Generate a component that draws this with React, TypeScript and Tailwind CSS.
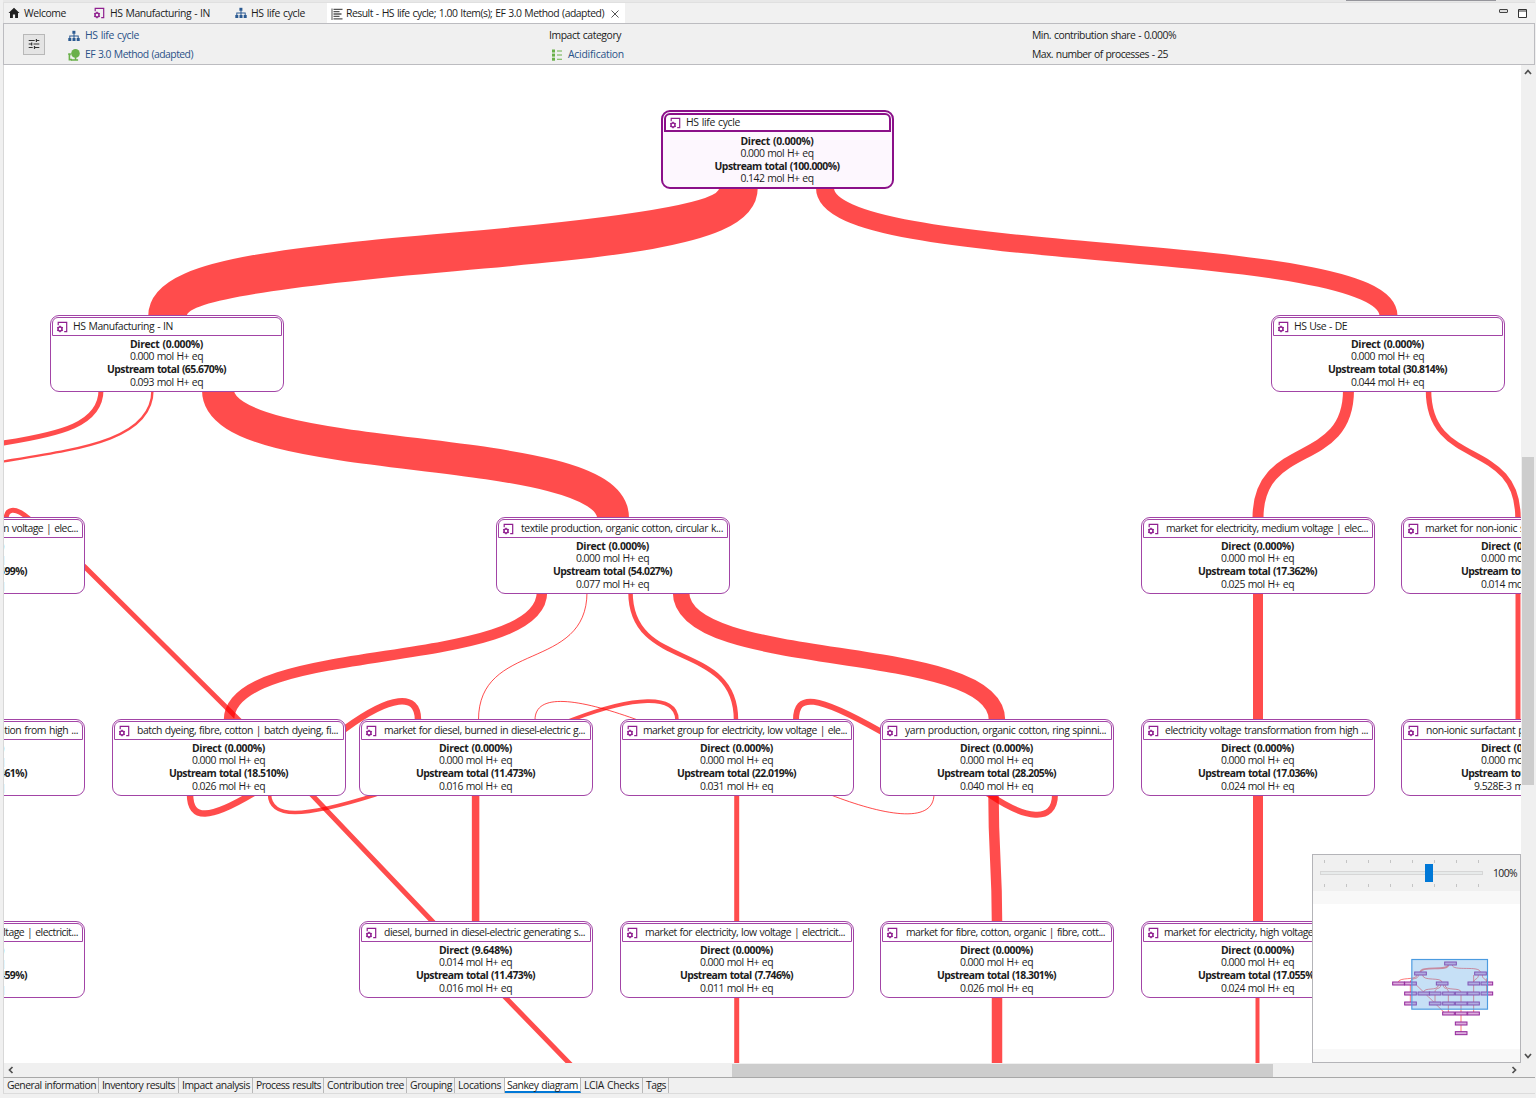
import { useLayoutEffect, useRef, useState } from 'react';

type TextProps = { children: string; w: number; className?: string };

/* A single line of text whose tracking is tuned so that it fills `w` pixels. */
function Line({ children, w, className = '' }: TextProps) {
  const ref = useRef<HTMLSpanElement>(null);
  const [spacing, setSpacing] = useState(0);
  useLayoutEffect(() => {
    const el = ref.current;
    if (!el) return;
    const natural = el.getBoundingClientRect().width - spacing * children.length;
    setSpacing((w - natural) / children.length);
  }, [children, w]);
  return (
    <span ref={ref} className={`inline-block whitespace-pre [word-spacing:0.7px] ${className}`} style={{ letterSpacing: `${spacing}px` }}>
      {children}
    </span>
  );
}

function ProcessIcon({ className = '' }: { className?: string }) {
  return (
    <svg viewBox="0 0 12 12" className={className} fill="none" stroke="#8f1f8f">
      <path d="M2.200 4.200V1.300H10.700V10.600H8.200" strokeWidth="1.200" />
      <circle cx="4" cy="8" r="2" strokeWidth="1.400" />
      <path d="M4 4.800V6M4 10v1.200M1.200 6.400l1.100.6M5.700 9l1.100.6M1.200 9.600L2.300 9M5.700 7l1.100-.6" strokeWidth="1.400" />
    </svg>
  );
}

function SystemIcon() {
  return (
    <svg viewBox="0 0 12 12" className="h-3 w-3 shrink-0" fill="#2b5a92">
      <rect x="4.4" y="0.8" width="3" height="3" />
      <rect x="0.3" y="8" width="3" height="3" />
      <rect x="4.5" y="8" width="3" height="3" />
      <rect x="8.7" y="8" width="3" height="3" />
      <path d="M5.5 3.5h1v2h4.2V8h-1V6.5H6.5V8h-1V6.5H2.3V8h-1V5.5h4.2z" />
    </svg>
  );
}

function HomeIcon() {
  return (
    <svg viewBox="0 0 12 12" className="h-3 w-3 shrink-0" fill="#222">
      <path d="M6 .8L.5 6H2v5h2.9V7.6h2.2V11H10V6h1.5z" />
    </svg>
  );
}

function ResultIcon() {
  return (
    <svg viewBox="0 0 12 12" className="h-3 w-3 shrink-0" stroke="#555" fill="none">
      <path d="M1 .5v11.500" strokeWidth="1" />
      <path d="M2.500 1.300h9M2.500 3.700h6M2.500 6h8M2.500 8.400h6M2.500 10.800h9" strokeWidth="1.300" />
    </svg>
  );
}

function MethodIcon() {
  return (
    <svg viewBox="0 0 12 12" className="h-3 w-3 shrink-0" fill="#6ab04a">
      <circle cx="7.5" cy="4.4" r="4.3" />
      <path d="M6.8 8h1.500v2.300h1.800v1.500H3V10.300h3.800z" />
      <path d="M.2 4.200h2.600v2H2.200v3.500h1.800V11.500H.6V6H.2z" />
    </svg>
  );
}

function CategoryIcon() {
  return (
    <svg viewBox="0 0 12 12" className="h-3 w-3 shrink-0" fill="#6ab04a">
      <rect x="1" y="0.5" width="3" height="3" />
      <rect x="1" y="4.600" width="3" height="3" />
      <rect x="1" y="8.700" width="3" height="3" />
      <path d="M6 1.500h5v1H6zM6 5.600h5v1H6zM6 9.700h5v1H6z" />
    </svg>
  );
}

function SettingsIcon() {
  return (
    <svg viewBox="0 0 12 12" className="h-3 w-3" stroke="#333" fill="none" strokeWidth="1.200">
      <path d="M.7 2.500h6M8.400 2.500h2.900M8.400.9v3.200M.7 6h3M5.500 6h5.800M3.700 4.400v3.200M.7 9.500h4M6.500 9.500h4.800M6.500 7.900v3.200" />
    </svg>
  );
}

type NodeData = {
  x: number;
  y: number;
  title: string;
  tx: number;
  tw: number;
  direct?: string;
  own?: string;
  share: string;
  total: string;
  root?: boolean;
};

/* Coordinates are relative to the canvas, whose origin is (4, 66) of the window. */
const nodes: NodeData[] = [
  { x: 657, y: 44, title: 'HS life cycle', tx: 25, tw: 54, share: '100.000', total: '0.142', root: true },
  { x: 46, y: 249, title: 'HS Manufacturing - IN', tx: 23, tw: 100, share: '65.670', total: '0.093' },
  { x: 1267, y: 249, title: 'HS Use - DE', tx: 23, tw: 53, share: '30.814', total: '0.044' },
  { x: -153, y: 451, title: 'market for electricity, medium voltage | elec...', tx: 25, tw: 202, share: '10.599', total: '0.015' },
  { x: 492, y: 451, title: 'textile production, organic cotton, circular k...', tx: 25, tw: 202, share: '54.027', total: '0.077' },
  { x: 1137, y: 451, title: 'market for electricity, medium voltage | elec...', tx: 25, tw: 202, share: '17.362', total: '0.025' },
  { x: 1397, y: 451, title: 'market for non-ionic surfactant | non-ionic s...', tx: 24, tw: 207, share: '7.125', total: '0.014' },
  { x: -153, y: 653, title: 'electricity voltage transformation from high ...', tx: 24, tw: 203, share: '10.461', total: '0.015' },
  { x: 108, y: 653, title: 'batch dyeing, fibre, cotton | batch dyeing, fi...', tx: 25, tw: 201, share: '18.510', total: '0.026' },
  { x: 355, y: 653, title: 'market for diesel, burned in diesel-electric g...', tx: 25, tw: 201, share: '11.473', total: '0.016' },
  { x: 616, y: 653, title: 'market group for electricity, low voltage | ele...', tx: 23, tw: 204, share: '22.019', total: '0.031' },
  { x: 876, y: 653, title: 'yarn production, organic cotton, ring spinni...', tx: 25, tw: 201, share: '28.205', total: '0.040' },
  { x: 1137, y: 653, title: 'electricity voltage transformation from high ...', tx: 24, tw: 203, share: '17.036', total: '0.024' },
  { x: 1397, y: 653, title: 'non-ionic surfactant production, fatty acid d...', tx: 25, tw: 203, share: '6.712', total: '9.528E-3' },
  { x: -153, y: 855, title: 'market for electricity, high voltage | electricit...', tx: 24, tw: 203, share: '10.459', total: '0.015' },
  { x: 355, y: 855, title: 'diesel, burned in diesel-electric generating s...', tx: 25, tw: 201, direct: '9.648', own: '0.014', share: '11.473', total: '0.016' },
  { x: 616, y: 855, title: 'market for electricity, low voltage | electricit...', tx: 25, tw: 200, share: '7.746', total: '0.011' },
  { x: 876, y: 855, title: 'market for fibre, cotton, organic | fibre, cott...', tx: 26, tw: 199, share: '18.301', total: '0.026' },
  { x: 1137, y: 855, title: 'market for electricity, high voltage | electricit...', tx: 23, tw: 203, share: '17.055', total: '0.024' },
];

function ProcessNode({ n }: { n: NodeData }) {
  const direct = n.direct ?? '0.000';
  const own = n.own ?? '0.000';
  return (
    <div
      className={
        n.root
          ? 'absolute flex h-[79px] w-[233px] flex-col rounded-[9px] border-2 border-[#8b1089] bg-[#fdf7fe] px-px pt-px'
          : 'absolute flex h-[77px] w-[234px] flex-col rounded-[9px] border border-[#a244a6] bg-white px-px pt-px'
      }
      style={{ left: n.x, top: n.y }}
    >
      <div
        className={
          n.root
            ? 'relative flex h-[19px] shrink-0 items-center rounded-t-[6px] border-2 border-[#8b1089] bg-white'
            : 'relative flex h-[19px] shrink-0 items-center rounded-t-[6px] border border-[#a244a6]'
        }
      >
        <ProcessIcon className="ml-[3px] h-3 w-3" />
        <div className={n.root ? 'absolute -top-[1px] leading-[16px]' : 'absolute top-0 leading-[16px]'} style={{ left: n.tx - (n.root ? 5 : 3) }}>
          <Line w={n.tw}>{n.title}</Line>
        </div>
      </div>
      <div className={n.root ? 'flex flex-col items-center pr-px pt-[2.500px] leading-[12.600px]' : 'flex flex-col items-center pr-px pt-[1.800px] leading-[12.600px]'}>
        <Line w={73} className="font-bold">{`Direct (${direct}%)`}</Line>
        <Line w={73}>{`${own} mol H+ eq`}</Line>
        <Line w={n.share.length === 7 ? 125 : n.share.length === 6 ? 119 : 113} className="font-bold">
          {`Upstream total (${n.share}%)`}
        </Line>
        <Line w={n.total.length > 5 ? 87 : 73}>{`${n.total} mol H+ eq`}</Line>
      </div>
    </div>
  );
}

/* Flow bands: path and thickness, in window coordinates. */
const links: [string, number][] = [
  ['M738.5 188C738.5 266 167.500 238 167.500 316', 38.500],
  ['M825 188C825 266 1388.500 238 1388.500 316', 18],
  ['M101 390C101 424 62 434 0 443.500', 5],
  ['M152.500 390C152.500 440 80 449 0 462', 2.400],
  ['M218 390C218 470 613 438 613 518', 32],
  ['M1348.500 390C1348.500 470 1258 438 1258 518', 11],
  ['M1428.500 390C1428.500 470 1518 438 1518 518', 5.500],
  ['M542 592C542 672 229 640 229 720', 10.500],
  ['M587 592C587 672 478.500 640 478.500 720', 1],
  ['M630.500 592C630.500 672 736 640 736 720', 4.500],
  ['M681 592C681 672 997 640 997 720', 16.500],
  ['M1258 592V720', 10],
  ['M1518 592V720', 5],
  ['M1258 794V922', 10],
  ['M736.700 794V922', 5],
  ['M475.600 794V922', 7.500],
  ['M993.500 794C993.500 860 997 860 997 922', 10.500],
  ['M736.700 996V1064', 5],
  ['M997 996V1064', 10.500],
  ['M1257.500 996V1064', 4],
  ['M6 520C6 509 14 506 28 518L85 567L240 721L312 795L432 921L505 997L571 1065', 5],
  ['M190 794C190 821 210 819 252 794L346 728C390 696 418 692 418 720', 6.500],
  ['M269.500 794C270 819 302 818 375 795L574 719C632 697 677 693 677 720', 3.600],
  ['M535 720C535 692 579 699 635 719L831 795C880 814 934 826 934 794', 1],
  ['M796 720C796 693 816 695 880 731L990 795C1024 818 1055 825 1055 794', 6],
];

const mapNodes: [number, number][] = [
  [451, 371], [361, 401], [541, 401],
  [295, 431], [331, 431], [426, 431], [521, 431], [560, 431],
  [331, 461], [371, 461], [405, 461], [445, 461], [483, 461], [520, 461], [560, 461],
  [331, 491], [405, 491], [445, 491], [483, 491], [520, 491],
  [445, 521], [483, 521], [520, 521], [483, 551], [483, 580],
];

function MiniMap() {
  return (
    <svg viewBox="39 192 621 435" className="h-[145px] w-[207px]" fill="none">
      <g stroke="#ff4c4c" strokeOpacity="0.75" strokeWidth="3">
        <path d="M445 375C445 395 361 375 361 397" strokeWidth="5" />
        <path d="M457 375C457 395 541 375 541 397" />
        <path d="M351 405C351 422 295 410 295 427M355 405C355 422 331 410 331 427M368 405C368 425 426 410 426 427" />
        <path d="M349 435L385 470L440 525M415 435C415 455 371 440 371 457M422 435C422 450 405 440 405 457M430 435C430 450 445 440 445 457M435 435C435 455 483 440 483 457" />
        <path d="M331 435V491M521 405V521M560 415V461M405 461V491M445 461V521M483 461V580M535 405C535 420 521 415 521 427M547 405C547 420 560 415 560 427" />
      </g>
      {mapNodes.map(([x, y]) => (
        <rect key={`${x}-${y}`} x={x - 17} y={y - 5} width="35" height="9" fill="#dcaedc" stroke="#93279b" strokeWidth="3" />
      ))}
      <rect x="335.500" y="358.500" width="227" height="149" fill="#60a9e6" fillOpacity="0.36" stroke="#4b9be0" strokeWidth="3.500" />
    </svg>
  );
}

const ticks = [0, 1, 2, 3, 4, 5, 6, 7];

function ZoomPanel() {
  return (
    <div className="absolute left-[1308px] top-[788px] flex h-[209px] w-[209px] flex-col border border-[#b4b4b8] bg-[#f8f8f8]">
      <div className="flex h-[36px] items-center bg-[#f0f0f0] pl-[7px]">
        <div className="relative flex h-[27px] w-[163px] flex-col justify-between">
          <div className="flex justify-between px-[4px]">
            {ticks.map((t) => <div key={t} className="h-[3px] w-px bg-[#c4c4c4]" />)}
          </div>
          <div className="h-[4px] border border-[#d6d6d6] bg-[#e7eaea]" />
          <div className="flex justify-between px-[4px]">
            {ticks.map((t) => <div key={t} className="h-[3px] w-px bg-[#c4c4c4]" />)}
          </div>
          <div className="absolute left-[105px] top-[4px] h-[18px] w-[8px] bg-[#0078d7]" />
        </div>
        <div className="ml-[10px] pt-[2px]"><Line w={24}>100%</Line></div>
      </div>
      <div className="mt-[13px] bg-white">
        <MiniMap />
      </div>
    </div>
  );
}

const bottomTabs: [string, number, string][] = [
  ['General information', 89, 'w-[95px] pl-[3px]'],
  ['Inventory results', 73, 'w-[80px] pl-[3px]'],
  ['Impact analysis', 68, 'w-[74px] pl-[3px]'],
  ['Process results', 65, 'w-[71px] pl-[3px]'],
  ['Contribution tree', 77, 'w-[83px] pl-[3px]'],
  ['Grouping', 42, 'w-[48px] pl-[3px]'],
  ['Locations', 43, 'w-[50px] pl-[3px]'],
  ['Sankey diagram', 71, 'w-[76px] border-b-2 border-b-[#0078d7] bg-white pl-[2px] pt-[2px]'],
  ['LCIA Checks', 55, 'w-[62px] pl-[3px]'],
  ['Tags', 20, 'w-[26px] pl-[3px]'],
];

function Chevron({ d, className = '' }: { d: string; className?: string }) {
  return (
    <svg viewBox="0 0 8 8" className={`h-2 w-2 ${className}`} fill="none" stroke="#505050" strokeWidth="1.7">
      <path d={d} />
    </svg>
  );
}

export default function App() {
  return (
    <div className="flex h-[1098px] w-[1536px] flex-col overflow-hidden bg-[#f0f0f0] pl-[3px] pr-px font-['Open_Sans','Noto_Sans',sans-serif] text-[10.400px] text-[#1c1c1c]">
      <div className="flex h-[2px] shrink-0 justify-end bg-[#e8e8e8] pr-[39px]">
        <div className="h-px w-[150px] bg-[#96969c]" />
      </div>
      <div className="flex h-[21px] shrink-0 items-center border-l border-t border-[#e0e0e0] bg-[#f1f1f1]">
        <div className="flex w-[89px] items-center gap-[4px] pl-[4px] pt-px">
          <HomeIcon />
          <Line w={42}>Welcome</Line>
        </div>
        <div className="flex w-[142px] items-center gap-[5px] pt-px">
          <ProcessIcon className="h-3 w-3 shrink-0" />
          <Line w={100}>HS Manufacturing - IN</Line>
        </div>
        <div className="flex w-[92px] items-center gap-[4px] pt-px">
          <SystemIcon />
          <Line w={54}>HS life cycle</Line>
        </div>
        <div className="flex h-[21px] w-[298px] items-center gap-[3px] bg-white pl-[4px] pt-px">
          <ResultIcon />
          <Line w={258}>Result - HS life cycle; 1.00 Item(s); EF 3.0 Method (adapted)</Line>
          <svg viewBox="0 0 8 8" className="ml-[4px] h-2 w-2 shrink-0" stroke="#555" strokeWidth="1">
            <path d="M.5.5l7 7M7.500.5l-7 7" />
          </svg>
        </div>
        <div className="ml-auto mr-[8px] flex items-center gap-[10px]">
          <svg viewBox="0 0 9 9" className="h-[9px] w-[9px]" fill="#ddd" stroke="#444" strokeWidth="1">
            <rect x="0.5" y="0.500" width="8" height="3" rx=".5" />
          </svg>
          <svg viewBox="0 0 9 9" className="h-[9px] w-[9px]" fill="#fff" stroke="#333" strokeWidth="1">
            <path d="M.5.5h8v8h-8zM.5 2h8" />
          </svg>
        </div>
      </div>
      <div className="flex h-[42px] shrink-0 items-center border border-[#bcbcc0] bg-[#f0f0f0]">
        <div className="ml-[19px] flex h-[21px] w-[22px] items-center justify-center border border-[#b8b8b8] bg-[#e4e4e4]">
          <SettingsIcon />
        </div>
        <div className="ml-[23px] flex w-[481px] flex-col gap-[3px] pt-[2px] text-[#2b5288]">
          <div className="flex h-4 items-center gap-[5px]"><SystemIcon /><Line w={54}>HS life cycle</Line></div>
          <div className="flex h-4 items-center gap-[5px]"><MethodIcon /><Line w={108}>EF 3.0 Method (adapted)</Line></div>
        </div>
        <div className="flex w-[483px] flex-col gap-[3px] pt-[2px]">
          <div className="flex h-4 items-center"><Line w={72}>Impact category</Line></div>
          <div className="flex h-4 items-center gap-[5px] pl-[2px] text-[#2b5288]"><CategoryIcon /><Line w={56}>Acidification</Line></div>
        </div>
        <div className="flex flex-col gap-[3px] pt-[2px]">
          <div className="flex h-4 items-center"><Line w={144}>Min. contribution share - 0.000%</Line></div>
          <div className="flex h-4 items-center"><Line w={136}>Max. number of processes - 25</Line></div>
        </div>
      </div>
      <div className="flex h-[998px] shrink-0 border-l border-[#d8d8d8]">
        <div className="bg-white pt-px">
          <div className="relative h-[997px] w-[1517px] overflow-hidden bg-white">
            <svg viewBox="4 66 1517 997" className="h-[997px] w-[1517px]" fill="none" stroke="#ff0000" strokeOpacity="0.7">
              {links.map(([d, width]) => <path key={d} d={d} strokeWidth={width} />)}
            </svg>
            {nodes.map((n) => <ProcessNode key={`${n.x}-${n.y}`} n={n} />)}
            <ZoomPanel />
          </div>
        </div>
        <div className="flex w-[14px] flex-col items-center bg-[#f0f0f0]">
          <Chevron d="M1 6l3-3.500L7 6" className="mt-[3px]" />
          <div className="mt-[381px] h-[328px] w-[12px] bg-[#cdcdcd]" />
          <Chevron d="M1 2l3 3.500L7 2" className="mb-[3px] mt-auto" />
        </div>
      </div>
      <div className="flex h-[14px] w-[1518px] shrink-0 items-center border-l border-[#d8d8d8]">
        <Chevron d="M5.500 1L2.500 4l3 3" className="ml-[3px]" />
        <div className="ml-[717px] h-[13px] w-[541px] bg-[#cdcdcd]" />
        <Chevron d="M2.500 1l3 3-3 3" className="ml-auto mr-[3px]" />
      </div>
      <div className="flex h-[17px] shrink-0 border-b border-l border-t border-b-[#dcdcdc] border-l-[#d8d8d8] border-t-[#a8a8a8]">
        {bottomTabs.map(([label, w, cls]) => (
          <div key={label} className={`flex shrink-0 items-center border-r border-r-[#b8b8b8] ${cls}`}>
            <Line w={w}>{label}</Line>
          </div>
        ))}
      </div>
    </div>
  );
}
